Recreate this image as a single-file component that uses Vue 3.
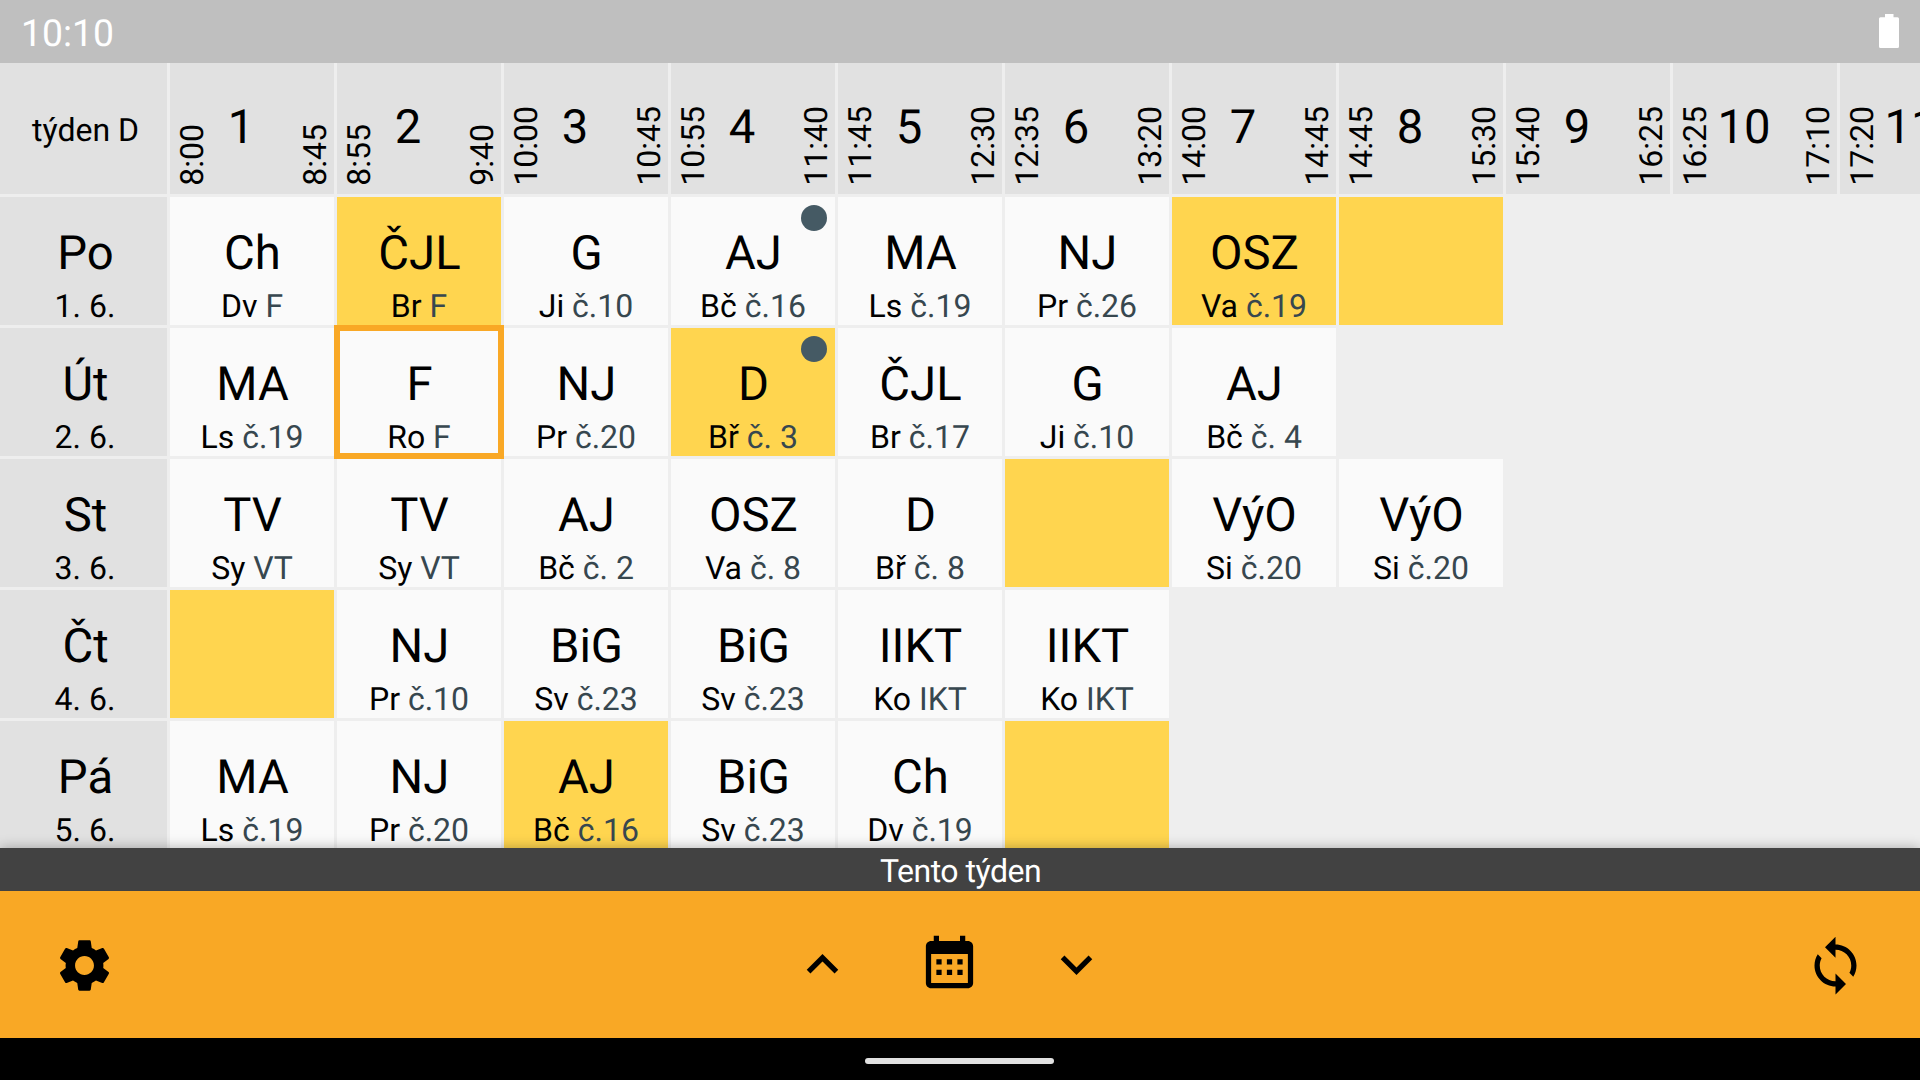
<script setup>
const hours = [
  ['1', '8:00', '8:45'],
  ['2', '8:55', '9:40'],
  ['3', '10:00', '10:45'],
  ['4', '10:55', '11:40'],
  ['5', '11:45', '12:30'],
  ['6', '12:35', '13:20'],
  ['7', '14:00', '14:45'],
  ['8', '14:45', '15:30'],
  ['9', '15:40', '16:25'],
  ['10', '16:25', '17:10'],
  ['11', '17:20', ''],
]

const l = (subject, teacher, room, opts = {}) => ({ subject, teacher, room, ...opts })
const changed = { changed: true }
const free = { changed: true }

const days = [
  {
    name: 'Po',
    date: '1. 6.',
    lessons: [
      l('Ch', 'Dv', 'F'),
      l('ČJL', 'Br', 'F', changed),
      l('G', 'Ji', 'č.10'),
      l('AJ', 'Bč', 'č.16', { note: true }),
      l('MA', 'Ls', 'č.19'),
      l('NJ', 'Pr', 'č.26'),
      l('OSZ', 'Va', 'č.19', changed),
      free,
    ],
  },
  {
    name: 'Út',
    date: '2. 6.',
    lessons: [
      l('MA', 'Ls', 'č.19'),
      l('F', 'Ro', 'F', { current: true }),
      l('NJ', 'Pr', 'č.20'),
      l('D', 'Bř', 'č. 3', { changed: true, note: true }),
      l('ČJL', 'Br', 'č.17'),
      l('G', 'Ji', 'č.10'),
      l('AJ', 'Bč', 'č. 4'),
    ],
  },
  {
    name: 'St',
    date: '3. 6.',
    lessons: [
      l('TV', 'Sy', 'VT'),
      l('TV', 'Sy', 'VT'),
      l('AJ', 'Bč', 'č. 2'),
      l('OSZ', 'Va', 'č. 8'),
      l('D', 'Bř', 'č. 8'),
      free,
      l('VýO', 'Si', 'č.20'),
      l('VýO', 'Si', 'č.20'),
    ],
  },
  {
    name: 'Čt',
    date: '4. 6.',
    lessons: [
      free,
      l('NJ', 'Pr', 'č.10'),
      l('BiG', 'Sv', 'č.23'),
      l('BiG', 'Sv', 'č.23'),
      l('IIKT', 'Ko', 'IKT'),
      l('IIKT', 'Ko', 'IKT'),
    ],
  },
  {
    name: 'Pá',
    date: '5. 6.',
    lessons: [
      l('MA', 'Ls', 'č.19'),
      l('NJ', 'Pr', 'č.20'),
      l('AJ', 'Bč', 'č.16', changed),
      l('BiG', 'Sv', 'č.23'),
      l('Ch', 'Dv', 'č.19'),
      free,
    ],
  },
]
</script>

<template>
  <div class="screen">
    <header class="status">
      <span class="clock">10:10</span>
      <svg class="battery" width="20" height="34" viewBox="0 0 20 34">
        <path d="M6 0h8.500v3.300H18.500A1.500 1.500 0 0 1 20 4.800V32.500A1.500 1.500 0 0 1 18.500 34H1.500A1.500 1.500 0 0 1 0 32.500V4.800A1.500 1.500 0 0 1 1.500 3.300H6z" fill="#fff" />
      </svg>
    </header>

    <main class="timetable">
      <div class="row">
        <div class="corner">týden D</div>
        <div v-for="h in hours" :key="h[0]" class="hour">
          <span class="time">{{ h[1] }}</span>
          <span class="number">{{ h[0] }}</span>
          <span class="time">{{ h[2] }}</span>
        </div>
      </div>
      <div v-for="day in days" :key="day.name" class="row">
        <div class="day">
          <div class="big">{{ day.name }}</div>
          <div class="small">{{ day.date }}</div>
        </div>
        <div
          v-for="(lesson, i) in day.lessons"
          :key="i"
          class="lesson"
          :class="{ changed: lesson.changed, current: lesson.current }"
        >
          <template v-if="lesson.subject">
            <div class="big">{{ lesson.subject }}</div>
            <div class="small">{{ lesson.teacher }} <span class="room">{{ lesson.room }}</span></div>
          </template>
          <i v-if="lesson.note" class="dot"></i>
        </div>
      </div>
    </main>

    <div class="week">Tento týden</div>

    <nav class="bar">
      <svg class="icon" viewBox="0 0 24 24">
        <path d="M19.140 12.940c.04-.3.060-.61.060-.94 0-.32-.02-.64-.07-.94l2.030-1.580c.18-.14.230-.41.120-.61l-1.920-3.320c-.12-.22-.37-.29-.59-.22l-2.390.96c-.5-.38-1.030-.7-1.620-.94l-.36-2.540c-.04-.24-.24-.41-.48-.41h-3.840c-.24 0-.43.17-.47.41l-.36 2.540c-.59.24-1.130.57-1.620.94l-2.390-.96c-.22-.08-.47 0-.59.22L2.740 8.870c-.12.21-.08.47.12.61l2.030 1.580c-.05.3-.09.63-.09.94s.02.640.070.940l-2.030 1.580c-.18.14-.23.41-.12.61l1.920 3.320c.12.22.37.290.59.220l2.390-.96c.5.38 1.030.7 1.620.94l.36 2.540c.05.24.24.41.48.41h3.840c.24 0 .44-.17.47-.41l.36-2.540c.59-.24 1.130-.56 1.620-.94l2.390.96c.22.08.47 0 .59-.22l1.920-3.320c.12-.22.070-.47-.12-.61l-2.010-1.580zM12 15.600c-1.980 0-3.600-1.620-3.600-3.600s1.620-3.600 3.600-3.600 3.600 1.620 3.600 3.600-1.620 3.600-3.600 3.600z" />
      </svg>
      <div class="paging">
        <svg class="icon" viewBox="0 0 24 24">
          <path d="M12 8l-6 6 1.410 1.410L12 10.830l4.590 4.580L18 14z" />
        </svg>
        <svg class="icon" viewBox="0 0 24 24">
          <path fill-rule="evenodd" d="M19 3h-1V1h-2v2H8V1H6v2H5c-1.110 0-2 .9-2 2v14c0 1.100.89 2 2 2h14c1.100 0 2-.9 2-2V5c0-1.100-.9-2-2-2zm0 16H5V8h14z" />
          <path d="M7 10h2v2H7zM11 10h2v2h-2zM15 10h2v2h-2zM7 14h2v2H7zM11 14h2v2h-2zM15 14h2v2h-2z" />
        </svg>
        <svg class="icon" viewBox="0 0 24 24">
          <path d="M16.590 8.590L12 13.170 7.410 8.590 6 10l6 6 6-6z" />
        </svg>
      </div>
      <svg class="icon" viewBox="0 0 24 24">
        <path d="M12 4V1L8 5l4 4V6c3.310 0 6 2.690 6 6 0 1.010-.25 1.970-.7 2.800l1.460 1.460C19.540 15.030 20 13.570 20 12c0-4.420-3.580-8-8-8zm0 14c-3.310 0-6-2.690-6-6 0-1.010.25-1.970.7-2.800L5.240 7.740C4.460 8.970 4 10.430 4 12c0 4.420 3.580 8 8 8v3l4-4-4-4v3z" />
      </svg>
    </nav>

    <footer class="gesture"><i class="handle"></i></footer>
  </div>
</template>

<style>
body {
  margin: 0;
  overflow: hidden;
}
</style>

<style scoped>
.screen {
  width: 1920px;
  height: 1080px;
  overflow: hidden;
  display: flex;
  flex-direction: column;
  background: #eee;
  color: #000;
  font-family: Roboto, "Liberation Sans", sans-serif;
  text-rendering: geometricPrecision;
}
.status {
  flex: none;
  height: 63px;
  box-sizing: border-box;
  padding: 0 21px 0 21px;
  display: flex;
  justify-content: space-between;
  align-items: flex-start;
  background: #bfbfbf;
}
.clock {
  color: #fff;
  font-size: 37.3px;
  line-height: 68px;
}
.battery {
  margin-top: 14px;
}
.timetable {
  flex: none;
  height: 785px;
  overflow: hidden;
  display: flex;
  flex-direction: column;
  gap: 3px;
}
.row {
  flex: none;
  display: flex;
  gap: 3px;
  width: 2010px;
}
.corner,
.hour {
  height: 131px;
  background: #e1e1e1;
}
.corner,
.day {
  flex: none;
  width: 167px;
  text-align: center;
  background: #e1e1e1;
}
.corner {
  font-size: 32px;
  line-height: 134px;
  text-indent: 4px;
}
.hour {
  flex: none;
  width: 164px;
  box-sizing: border-box;
  padding: 0 0 8px 3px;
  display: flex;
  justify-content: space-between;
  align-items: flex-end;
}
.time {
  width: 38px;
  writing-mode: vertical-rl;
  transform: rotate(180deg);
  font-size: 32px;
  line-height: 38px;
}
.number {
  flex: 1;
  align-self: flex-start;
  margin-right: 25px;
  text-align: center;
  font-size: 47.25px;
  line-height: 128px;
  display: flex;
  justify-content: center;
}
.day,
.lesson {
  position: relative;
  height: 128px;
  box-sizing: border-box;
  padding-top: 28px;
  text-align: center;
  white-space: nowrap;
}
.day {
  padding-left: 3px;
}
.lesson {
  flex: none;
  width: 164px;
  background: #fafafa;
}
.lesson.changed {
  background: #ffd54f;
}
.lesson.current {
  outline: 6px solid #f9a825;
  outline-offset: -3px;
  z-index: 1;
}
.big {
  padding-left: 1px;
  font-size: 47.25px;
  line-height: 56px;
}
.small {
  margin-top: 6px;
  font-size: 32px;
  line-height: 38px;
}
.room {
  color: #37474f;
}
.dot {
  position: absolute;
  top: 8px;
  right: 8px;
  width: 26px;
  height: 26px;
  border-radius: 50%;
  background: #455a64;
}
.week {
  flex: none;
  position: relative;
  z-index: 2;
  height: 43px;
  background: #424242;
  box-shadow: 0 0 12px rgba(0, 0, 0, 0.3);
  color: #fff;
  font-size: 32px;
  letter-spacing: -0.5px;
  line-height: 46px;
  text-align: center;
  text-indent: 1px;
}
.bar {
  flex: none;
  position: relative;
  z-index: 3;
  height: 147px;
  box-sizing: border-box;
  padding: 1px 53px 0;
  display: flex;
  justify-content: space-between;
  align-items: center;
  background: #f9a825;
}
.icon {
  display: block;
  width: 63px;
  height: 63px;
  fill: #000;
}
.paging {
  display: flex;
  gap: 64px;
  margin: 0 21px 1px 0;
}
.gesture {
  flex: 1;
  display: flex;
  justify-content: center;
  align-items: flex-start;
  padding: 20px 1px 0 0;
  z-index: 3;
  background: #000;
}
.handle {
  width: 189px;
  height: 6px;
  border-radius: 3px;
  background: #e1e1e1;
}
</style>
